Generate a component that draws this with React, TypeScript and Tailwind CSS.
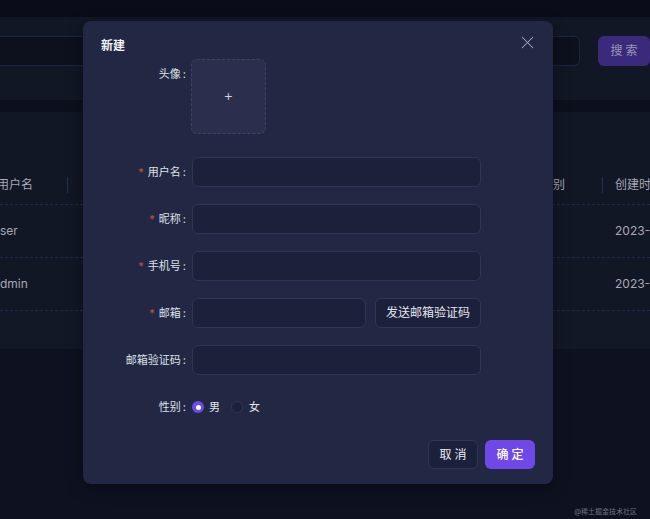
import { X } from "lucide-react";

const font = { fontFamily: '"Inter", "Noto Sans CJK SC", sans-serif' };

const fields = [
  { label: "用户名", required: true },
  { label: "昵称", required: true },
  { label: "手机号", required: true },
];

function Label({ text, required }: { text: string; required?: boolean }) {
  return (
    <div className="w-[91px] shrink-0 flex items-center justify-end pr-[6px] text-[11px] text-[#dfe1ea]">
      {required && <span className="text-[#d0454c] mr-[4px] text-[11px]">*</span>}
      <span>{text}</span>
      <span className="ml-[2px]">:</span>
    </div>
  );
}

function Input({ className = "w-[289px]" }: { className?: string }) {
  return (
    <div
      className={`${className} h-[30px] rounded-[6px] bg-[#1b203b] border border-[#2f3554]`}
    />
  );
}

function Backdrop() {
  return (
    <div className="w-[650px] h-[519px] flex flex-col bg-[#0e1220] overflow-hidden">
      <div className="h-[17px] bg-[#0a0d19]" />
      <div className="h-[83px] bg-[#121725] flex items-start pt-[19px] gap-[18px]">
        <div className="w-[582px] h-[30px] bg-[#0d111e] border border-[#1b2440] rounded-r-[6px] border-l-0" />
        <div className="w-[52px] h-[30px] rounded-[6px] bg-[#3b2a7c] text-[#9b98b3] text-[12px] tracking-[3px] pl-[3px] flex items-center justify-center">
          搜索
        </div>
      </div>
      <div className="h-[12px] bg-[#0c101c]" />
      <div className="bg-[#121725] flex flex-col">
        <div className="h-[53px]" />
        <div className="h-[40px] flex items-center text-[12px] text-[#a6a9b8] border-b border-dashed border-[#1f2a4c]">
          <div className="w-[71px] -ml-[3px] border-r border-[#263055] h-[16px] flex items-center">用户名</div>
          <div className="flex-1" />
          <div className="w-[50px] border-r border-[#263055] h-[16px] flex items-center">别</div>
          <div className="w-[47px] pl-[12px] whitespace-nowrap">创建时间</div>
        </div>
        {["ser", "dmin"].map((n) => (
          <div
            key={n}
            className="h-[53px] flex items-center text-[12px] text-[#a6a9b8] border-b border-dashed border-[#1f2a4c]"
          >
            <div className="w-[80px]">{n}</div>
            <div className="flex-1" />
            <div className="w-[35px] whitespace-nowrap">2023-0</div>
          </div>
        ))}
        <div className="h-[38px] bg-[#131826]" />
      </div>
      <div className="flex-1 bg-[#0e1220] flex items-end justify-end pr-[13px] pb-[2px]">
        <span className="text-[7px] text-[#6c7080]">@稀土掘金技术社区</span>
      </div>
    </div>
  );
}

export default function App() {
  return (
    <div className="relative w-[650px] h-[519px] overflow-hidden" style={font}>
      <Backdrop />
      <div className="absolute left-[83px] top-[21px] w-[470px] h-[463px] rounded-[8px] bg-[#222843] shadow-[0_4px_16px_rgba(0,0,0,0.4)] px-[18px] pt-[16px]">
        <div className="flex items-center justify-between h-[18px]">
          <span className="text-[12px] font-bold text-[#f2f3f7]">新建</span>
          <X className="w-[21px] h-[21px] text-[#a3a7ba] -mr-[3px] -mt-[8px]" strokeWidth={1.2} />
        </div>
        <div className="flex flex-col mt-[4px]">
          <div className="flex items-start">
            <div className="w-[90px] shrink-0 flex justify-end pr-[5px] pt-[7px] text-[11px] text-[#dfe1ea]">
              <span>头像</span>
              <span className="ml-[2px]">:</span>
            </div>
            <div className="w-[75px] h-[75px] rounded-[6px] border border-dashed border-[#3c4260] bg-[#2b2e4c] flex items-center justify-center text-[#d6d8e2] text-[15px] font-light">
              +
            </div>
          </div>
          <div className="flex flex-col gap-[17px] mt-[23px]">
            {fields.map((f) => (
              <div key={f.label} className="flex items-center">
                <Label text={f.label} required={f.required} />
                <Input />
              </div>
            ))}
            <div className="flex items-center">
              <Label text="邮箱" required />
              <Input className="w-[174px]" />
              <div className="ml-[9px] w-[106px] h-[30px] rounded-[6px] bg-[#1b203b] border border-[#2f3554] flex items-center justify-center text-[12px] text-[#e4e6ee]">
                发送邮箱验证码
              </div>
            </div>
            <div className="flex items-center">
              <Label text="邮箱验证码" />
              <Input />
            </div>
            <div className="flex items-center h-[30px]">
              <Label text="性别" />
              <div className="flex items-center text-[11px] text-[#e4e6ee]">
                <span className="w-[12px] h-[12px] rounded-full bg-[#7048e8] flex items-center justify-center">
                  <span className="w-[5px] h-[5px] rounded-full bg-white" />
                </span>
                <span className="ml-[5px]">男</span>
                <span className="ml-[11px] w-[12px] h-[12px] rounded-full bg-[#1b203b] border border-[#2f3554]" />
                <span className="ml-[6px]">女</span>
              </div>
            </div>
          </div>
        </div>
        <div className="absolute right-[18px] bottom-[15px] flex gap-[7px]">
          <div className="w-[50px] h-[29px] rounded-[6px] bg-[#1b203b] border border-[#2f3554] flex items-center justify-center text-[12px] text-[#eceef4] tracking-[3px] pl-[3px]">
            取消
          </div>
          <div className="w-[50px] h-[29px] rounded-[6px] bg-[#7048e8] flex items-center justify-center text-[12px] text-white tracking-[3px] pl-[3px] font-medium">
            确定
          </div>
        </div>
      </div>
    </div>
  );
}
